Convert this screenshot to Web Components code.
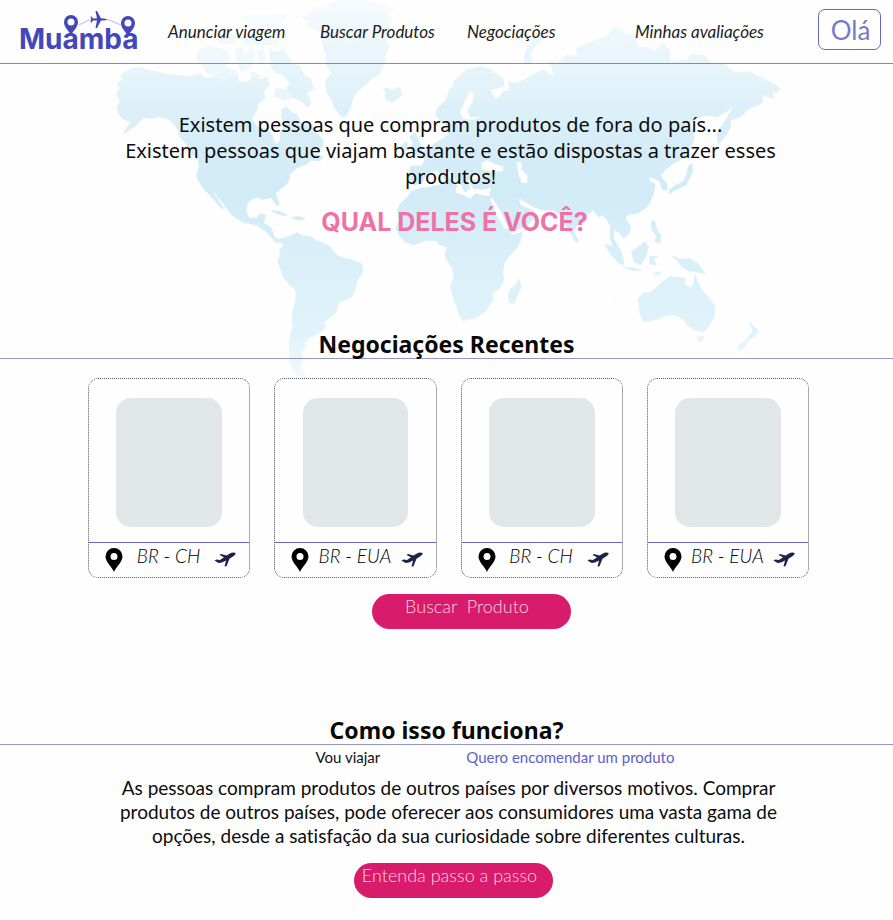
<!DOCTYPE html>
<html lang="pt-BR">
<head>
<meta charset="utf-8">
<meta name="viewport" content="width=device-width, initial-scale=1">
<title>Muamba</title>
<style>
  body { margin: 0; background: #fefefe; color: #0c0c0c; font-family: Lato, "Liberation Sans", sans-serif; font-variant-ligatures: none; }
</style>
</head>
<body>
<muamba-page></muamba-page>
<script>
const define = (name, html) => {
  const template = document.createElement('template');
  template.innerHTML = html;
  customElements.define(name, class extends HTMLElement {
    constructor() {
      super();
      this.attachShadow({ mode: 'open' }).append(template.content.cloneNode(true));
    }
  });
};

define('world-map', `
<style>
  :host { display: block; }
  svg { display: block; width: 100%; height: auto; }
</style>
<svg viewBox="0 0 893 380" aria-hidden="true">
  <defs>
    <linearGradient id="sea" x1="0" y1="0" x2="0" y2="1">
      <stop offset="0" stop-color="#f6fbfd"/><stop offset=".16" stop-color="#e8f5fb"/>
      <stop offset=".34" stop-color="#d8eef8"/><stop offset=".5" stop-color="#d1ebf7"/>
      <stop offset=".7" stop-color="#daf0f9"/><stop offset=".88" stop-color="#e1f3fa"/><stop offset="1" stop-color="#f3fafd"/>
    </linearGradient>
    <mask id="land" maskUnits="userSpaceOnUse" x="0" y="0" width="893" height="380">
      <g fill="#fff" stroke="#fff" stroke-width="3" stroke-linejoin="round">
        <g transform="translate(90 60) scale(.33333)">
          <path d="M80 100 90 85 82 72 98 58 94 45 120 28 150 22 175 32 200 35 230 44 260 45 300 50 330 42 345 55 370 52 400 62 420 54 440 50 450 68 470 66 490 55 510 60 530 50 538 75 520 95 526 115 505 130 500 150 485 175 500 200 530 208 545 222 552 245 560 252 572 240 570 220 582 200 575 170 575 150 590 140 606 158 620 165 640 200 655 188 665 192 675 215 700 240 696 262 680 272 665 280 700 290 690 302 665 300 650 312 630 318 620 325 600 340 598 358 590 372 570 388 555 400 568 430 563 437 555 432 545 412 520 418 500 412 480 420 470 435 468 455 478 475 500 474 510 462 526 464 520 490 540 500 548 515 552 532 570 538 582 535 585 550 572 548 555 545 530 515 500 495 480 490 460 487 425 465 400 430 375 400 358 385 380 415 402 446 392 442 360 405 340 385 325 360 320 345 328 320 325 300 305 280 300 265 270 230 262 205 245 185 232 175 210 170 185 175 160 172 140 195 110 215 100 221 104 214 125 185 100 178 85 160 82 140 92 125Z"/>
          <path d="M545 452 570 455 590 465 585 468 560 460Z M605 472 628 470 645 477 625 480Z"/>
          <path d="M580 535 600 530 620 518 640 528 660 530 680 542 700 550 720 560 730 575 745 588 760 595 785 600 815 612 818 635 800 665 795 690 785 710 765 718 745 730 742 748 735 760 715 775 700 790 705 805 690 815 670 828 655 835 645 850 645 865 632 875 638 890 630 920 650 952 635 955 612 940 600 905 598 870 600 830 610 800 606 780 610 750 618 720 618 690 600 675 580 650 572 625 563 605 570 590 570 570 582 555Z"/>
        </g>
        <g transform="translate(180 0) scale(.33333)">
          <path d="M365 50 395 38 400 25 440 20 460 5 500 0 560 0 580 12 610 15 640 28 622 42 636 60 625 80 632 100 618 120 628 140 612 170 618 185 604 205 600 222 575 235 560 252 535 270 520 290 512 320 500 345 485 350 465 325 455 300 440 275 438 240 455 218 436 190 440 165 430 140 426 110 415 90 380 78 385 62Z"/>
          <path d="M268 148 290 158 310 148 322 168 340 190 360 200 370 225 390 235 400 265 380 280 392 305 385 322 360 300 335 290 320 265 330 250 310 225 290 220 275 205Z"/>
          <path d="M610 268 622 264 635 270 660 263 666 285 650 298 635 306 615 295 618 280Z"/>
          <path d="M55 150 90 138 110 145 140 150 150 175 135 200 170 215 175 235 120 240 80 215 50 180Z M165 150 185 140 195 170 210 145 225 160 215 200 185 215 170 180Z M235 150 252 152 255 190 238 185Z M110 110 150 100 170 115 150 132 115 128Z M180 50 230 45 320 48 300 72 260 80 210 72Z M175 110 240 105 300 118 290 135 200 132Z M285 265 320 270 335 295 310 300 285 290Z M215 215 240 225 235 240 215 238Z" opacity=".7"/>
        </g>
        <g transform="translate(440 60) scale(.33333)">
          <path d="M-128 450-118 430-100 415-85 395-60 385-30 382 0 375 35 370 45 382 45 398 65 405 90 418 105 402 155 412 165 430 175 455 190 480 200 512 215 525 247 518 240 545 230 565 205 590 192 610 188 635 190 660 178 685 155 700 160 715 148 735 135 755 110 772 70 782 60 768 50 740 38 705 32 680 42 650 38 625 20 600 15 580 22 560 0 555-10 542-40 540-80 555-105 545-122 525-132 505-122 480Z"/>
          <path d="M238 657 243 680 232 705 222 730 208 728 205 705 212 685 228 675Z"/>
          <path d="M-12 165-8 145 20 120 28 90 38 80 45 60 80 30 120 20 150 28 165 40 188 52 192 75 170 85 150 90 165 120 180 110 190 95 210 90 205 65 225 70 250 62 290 38 310 30 320 35 345 55 335 20 325 0 345 10 365 0 380-15 415-10 410-35 440-50 470-60 500-70 520-98 545-90 560-75 585-80 590-40 630-35 640-25 670-50 688-30 690 8 710 5 740 0 755-15 790-15 815 10 850 12 880 35 910 38 930 35 955 50 975 58 1020 85 1010 98 995 95 1002 115 980 108 965 103 968 128 940 140 920 150 905 168 870 180 872 200 858 225 842 245 835 252 832 225 838 208 858 180 880 140 858 155 830 170 800 165 770 175 745 190 760 215 762 240 745 270 735 290 715 302 700 310 680 325 660 345 682 375 680 390 668 388 660 365 645 355 625 350 630 368 645 372 640 400 630 425 620 440 605 452 590 460 570 462 555 470 562 485 572 500 568 520 550 535 540 520 520 508 520 535 530 550 545 580 552 610 535 605 515 565 500 555 520 560 510 530 512 500 502 480 490 465 475 470 460 450 440 465 420 485 408 500 400 520 395 525 385 510 375 490 365 465 340 450 310 450 280 440 255 425 235 412 240 435 262 445 285 455 282 475 262 495 230 510 205 520 198 505 180 470 160 440 148 412 155 380 130 388 100 385 88 365 130 352 118 340 90 345 82 365 90 385 75 395 65 375 50 365 30 335 18 330 25 352 52 378 40 395 10 350-10 330-30 335-45 350-55 370-80 375-92 350-88 320-55 318-45 300-62 280-40 270-15 250 10 235 25 225 15 200 20 178 5 185Z"/>
          <path d="M-88 270-80 250-90 230-75 220-62 245-52 270-58 282-80 285Z M-115 255-100 245-96 265-112 275Z M250 0 255-15 262-40 290-65 318-72 290-48 272-20 278 5 258 12Z M395 508 412 535 415 548 402 540Z"/>
          <path d="M755 310 758 335 745 360 738 375 715 385 700 392 690 402 688 390 705 378 730 365 740 345 745 320Z"/>
          <path d="M495 555 515 562 540 590 550 615 535 608 515 585Z M550 622 580 625 605 632 580 632Z M575 575 600 558 615 545 625 560 615 595 602 615 582 605Z M630 590 652 590 640 598 648 615 630 612Z M635 482 645 485 650 510 662 525 660 548 645 545 650 528 635 510Z M698 588 720 598 750 597 775 612 795 642 770 635 745 632 725 620 715 605Z M640 640 665 636 655 645Z"/>
          <path d="M520 720 524 716Z M595 715 610 700 632 698 650 682 665 668 690 650 735 655 732 672 752 685 762 670 765 645 775 670 785 690 805 712 825 738 822 770 805 800 792 815 762 810 742 795 730 778 705 765 680 765 650 778 612 785 600 760Z M772 832 792 830 785 846 775 845Z M930 785 940 800 955 810 945 830 928 838 912 865 895 872 895 858 920 838 938 815Z"/>
        </g>
      </g>
      <g fill="#000" transform="translate(440 60) scale(.33333)">
        <path d="M88 95 100 98 98 125 82 150 90 172 125 170 100 180 70 178 60 155 72 130Z M125 310 140 300 165 312 190 320 188 334 155 335 125 328Z M230 305 245 308 245 330 262 345 262 368 245 368 236 345Z M150 415 158 415 185 460 205 505 195 508 170 465Z"/>
      </g>
    </mask>
  </defs>
  <rect width="893" height="380" fill="url(#sea)" mask="url(#land)"/>
</svg>`);

define('muamba-logo', `
<style>
  :host { display: block; }
  svg { display: block; overflow: visible; }
  text { font: 700 28px Inter, sans-serif; }
</style>
<svg width="122" height="48" viewBox="17 5 122 48" fill="#4347b8">
  <path d="M78 22Q97 9 120 22" fill="none" stroke="#b5b7e6" stroke-width="1"/>
  <text x="18" y="46">Muamba</text>
  <path fill-rule="evenodd" d="M70 32C67 27 63 24 63 19A7 7 0 0 1 77 19C77 24 73 27 70 32ZM70 15.500A3.500 3.500 0 1 0 70 22.500A3.500 3.500 0 1 0 70 15.500Z"/>
  <path fill-rule="evenodd" d="M127 33C124 28 120 25 120 20A7 7 0 0 1 134 20C134 25 130 28 127 33ZM127 16.500A3.500 3.500 0 1 0 127 23.500A3.500 3.500 0 1 0 127 16.500Z"/>
  <path d="M106 16.500C105 15.500 103 15.600 100 15.600L96 8H94.500L96 15.600H92L90.500 13.500H89.500L90.200 16.500L89.500 19.500H90.500L92 17.400H96L94.500 25H96L100 17.400C103 17.400 105 17.500 106 16.500Z"/>
</svg>`);

define('site-header', `
<style>
  :host { display: block; border-bottom: 1px solid #7f87c8; }
  header { display: flex; align-items: center; height: 63px; padding: 0 12px 0 18px; box-sizing: border-box; }
  nav { flex: 1; display: grid; grid-template-columns: 152fr 147fr 168fr 183fr; padding-left: 28px; }
  a { font-size: 17px; font-style: italic; line-height: 24px; color: #1c1c1c; text-decoration: none; white-space: nowrap; }
  button { width: 63px; height: 41px; margin-bottom: 4px; padding: 0 0 0 2px; border: 1px solid #6268bd; border-radius: 7px; background: #fff; color: #757bc9; font: 26px Lato, sans-serif; }
</style>
<header>
  <muamba-logo role="img" aria-label="Muamba"></muamba-logo>
  <nav>
    <a href="#anunciar">Anunciar viagem</a><a href="#buscar">Buscar Produtos</a><a href="#negociacoes">Negociações</a><a href="#avaliacoes">Minhas avaliações</a>
  </nav>
  <button type="button">Olá</button>
</header>`);

define('hero-banner', `
<style>
  :host { display: block; padding: 48px 0 0 8px; text-align: center; }
  p { margin: 0; font: 400 20px/26px "Noto Sans", sans-serif; }
  strong { display: block; margin-top: 17px; padding-left: 8px; font: 700 25px/30px Inter, sans-serif; color: #ee72a6; }
</style>
<p>Existem pessoas que compram produtos de fora do país...<br>Existem pessoas que viajam bastante e estão dispostas a trazer esses<br>produtos!</p>
<strong>QUAL DELES É VOCÊ?</strong>`);

define('section-title', `
<style>
  :host { display: block; border-bottom: 1px solid #9497c6; }
  h2 { margin: 0; text-align: center; font: 700 23px/28px "Noto Sans", sans-serif; color: #080808; }
</style>
<h2><slot></slot></h2>`);

define('deal-card', `
<style>
  :host { display: block; flex: 1; box-sizing: border-box; height: 200px; border: 1px dotted #55555f; border-radius: 10px; background: #fefefe; }
  .photo { width: 66%; height: 129px; margin: 19px auto 15px; border-radius: 15px; background: #e1e6e9; }
  .route { display: flex; align-items: center; justify-content: space-between; height: 33px; padding: 0 13px 0 16px; border-top: 1px solid #7260c5; }
  span { font-size: 19px; font-weight: 300; font-style: italic; line-height: 24px; padding-bottom: 8px; color: #000; }
  svg { display: block; flex: none; }
</style>
<div class="photo"></div>
<div class="route">
  <svg width="18" height="24" viewBox="0 0 18 24" aria-hidden="true"><path fill-rule="evenodd" d="M9 24C7 19 .500 14 .500 8.500A8.500 8.500 0 0 1 17.500 8.500C17.500 14 11 19 9 24ZM9 5A3.500 3.500 0 1 0 9 12A3.500 3.500 0 1 0 9 5Z"/></svg>
  <span><slot></slot></span>
  <svg width="22" height="16" viewBox="0 0 22 16" aria-hidden="true"><path fill="#1d2448" d="M21.500 1C20 0 17.500.500 15.500 1.800L12.500 3.500 7 2 5.500 3 10 5.300 6 8 2.500 7.500.500 8.500 4.500 11 8 10.500 12 8.500 10.500 14.500 12.500 14.200 15.500 6.800 19 4.500C21 3.200 22 2 21.500 1Z"/></svg>
</div>`);

define('pill-button', `
<style>
  :host { display: block; width: 199px; }
  button { display: block; width: 100%; height: 35px; padding: 0 8px 11px 0; border: 0; border-radius: 18px; background: #d81b6a; color: #f9d3e2; font: 300 18px/24px Lato, sans-serif; white-space: pre; }
</style>
<button type="button"><slot></slot></button>`);

define('how-it-works', `
<style>
  :host { display: block; }
  nav { display: flex; justify-content: center; gap: 86px; padding-left: 97px; line-height: 24px; font-size: 15px; }
  a { color: #5b61c8; text-decoration: none; }
  a[aria-current] { color: #111; }
  p { margin: 7px 0 0 4px; text-align: center; font-size: 19px; line-height: 24px; }
</style>
<section-title>Como isso funciona?</section-title>
<nav><a href="#viajar" aria-current="true">Vou viajar</a><a href="#encomendar">Quero encomendar um produto</a></nav>
<p>As pessoas compram produtos de outros países por diversos motivos. Comprar<br>produtos de outros países, pode oferecer aos consumidores uma vasta gama de<br>opções, desde a satisfação da sua curiosidade sobre diferentes culturas.</p>`);

define('muamba-page', `
<style>
  :host { display: block; position: relative; padding-bottom: 22px; }
  world-map { position: absolute; inset: 0 0 auto; z-index: -1; }
  .recent { margin-top: 93px; }
  .cards { display: flex; gap: 24px; margin: 19px 84px 16px 88px; }
  pill-button { margin: 0 auto; }
  .search { padding-left: 49px; }
  how-it-works { margin-top: 87px; }
  .steps { margin-top: 15px; padding-left: 14px; }
</style>
<world-map></world-map>
<site-header></site-header>
<main>
  <hero-banner></hero-banner>
  <section-title class="recent">Negociações Recentes</section-title>
  <div class="cards">
    <deal-card>BR - CH</deal-card><deal-card>BR - EUA</deal-card><deal-card>BR - CH</deal-card><deal-card>BR - EUA</deal-card>
  </div>
  <div class="search"><pill-button>Buscar  Produto</pill-button></div>
  <how-it-works></how-it-works>
  <div class="steps"><pill-button>Entenda passo a passo</pill-button></div>
</main>`);
</script>
</body>
</html>
